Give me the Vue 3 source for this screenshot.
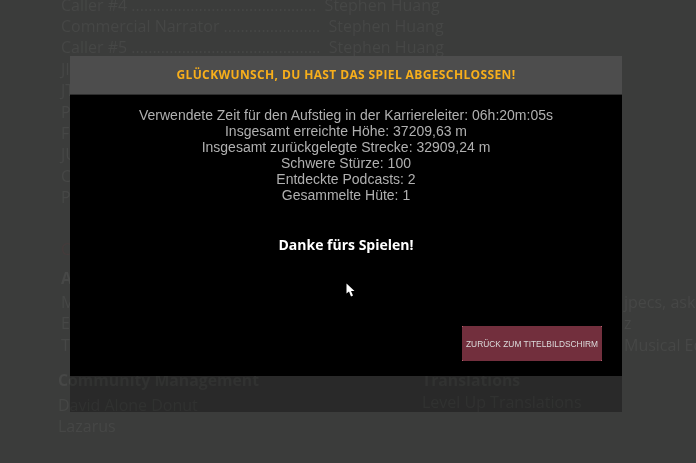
<script setup>
const roles = [
  { label: 'Caller #4', dots: 44, name: 'Stephen Huang' },
  { label: 'Commercial Narrator', dots: 23, name: 'Stephen Huang' },
  { label: 'Caller #5', dots: 45, name: 'Stephen Huang' },
];
const hidden = ['JI', 'JT', 'P', 'F', 'JU', 'C', 'P'];
const stats = [
  'Verwendete Zeit für den Aufstieg in der Karriereleiter: 06h:20m:05s',
  'Insgesamt erreichte Höhe: 37209,63 m',
  'Insgesamt zurückgelegte Strecke: 32909,24 m',
  'Schwere Stürze: 100',
  'Entdeckte Podcasts: 2',
  'Gesammelte Hüte: 1',
];
</script>

<template>
  <div class="page">
    <div class="credits">
      <div class="cast">
        <p v-for="role in roles" :key="role.label" class="line">
          {{ role.label }} {{ '.'.repeat(role.dots) }}&nbsp; {{ role.name }}
        </p>
        <p v-for="(item, i) in hidden" :key="i" class="line">{{ item }}</p>
      </div>

      <p class="line redLine">C</p>

      <div class="audio">
        <h3 class="heading">A</h3>
        <div class="audioRows">
          <div class="audioRow"><span>M</span><span class="right">jpecs, ask</span></div>
          <div class="audioRow"><span>E</span><span class="right">z</span></div>
          <div class="audioRow"><span>T</span><span class="right">Musical Ed</span></div>
        </div>
      </div>

      <div class="columns">
        <div>
          <h3 class="heading">Community Management</h3>
          <p class="line name">David Alone Donut</p>
          <p class="line">Lazarus</p>
        </div>
        <div>
          <h3 class="heading">Translations</h3>
          <p class="line">Level Up Translations</p>
        </div>
      </div>
    </div>

    <div class="modal">
      <header class="modalHeader">GLÜCKWUNSCH, DU HAST DAS SPIEL ABGESCHLOSSEN!</header>
      <div class="modalBody">
        <p v-for="line in stats" :key="line" class="stat">{{ line }}</p>
        <p class="thanks">Danke fürs Spielen!</p>
        <button class="backBtn">ZURÜCK ZUM TITELBILDSCHIRM</button>
        <svg class="cursor" width="10" height="15" viewBox="0 0 10 15">
          <path d="M0.5 0.5 L0.5 10.5 L3 8.5 L5 13.5 L7 12.5 L5 8 L8.5 8 Z" fill="#fff" />
        </svg>
      </div>
      <div class="modalFooter"></div>
    </div>
  </div>
</template>

<style>
html, body {
  margin: 0;
  background: #3b3c3b;
}
</style>

<style scoped>
.page {
  position: relative;
  width: 696px;
  height: 463px;
  overflow: hidden;
  background: #3b3c3b;
  font-family: "Open Sans", sans-serif;
  color: #464746;
  filter: blur(0.3px);
}

.credits {
  padding: 0 0 0 61px;
  margin-top: -5.5px;
  font-size: 16px;
  line-height: 21.4px;
}

.line {
  margin: 0;
  white-space: nowrap;
}

.redLine {
  margin-top: 30.5px;
  color: #443b3b;
}

.heading {
  margin: 0;
  font-size: 15.8px;
  font-weight: 700;
  white-space: nowrap;
  color: #474847;
}

.audio {
  margin-top: 8px;
}

.audioRows {
  margin-top: 2px;
}

.audioRow {
  display: flex;
  justify-content: space-between;
}

.right {
  width: 72px;
  white-space: nowrap;
}

.columns {
  display: grid;
  grid-template-columns: 364px 1fr;
  margin-top: 14px;
  margin-left: -3px;
}

.name {
  margin-top: 3px;
}

.modal {
  position: absolute;
  left: 70px;
  top: 56px;
  width: 552px;
  height: 356px;
  display: flex;
  flex-direction: column;
}

.modalHeader {
  height: 38px;
  line-height: 38px;
  flex-shrink: 0;
  background: #4d4d4d;
  border-bottom: 1px solid #2e2e2e;
  text-align: center;
  font-size: 12px;
  font-weight: 700;
  letter-spacing: 0.38px;
  color: #f8af1b;
}

.modalBody {
  position: relative;
  flex: 1;
  background: #000;
  padding-top: 12px;
  text-align: center;
}

.stat {
  margin: 0;
  font-family: "Liberation Sans", Arial, sans-serif;
  font-size: 14px;
  line-height: 16px;
  color: #b0b0b0;
}

.thanks {
  margin: 32px 0 0;
  font-size: 14px;
  line-height: 20px;
  font-weight: 700;
  color: #fff;
}

.backBtn {
  position: absolute;
  right: 20px;
  bottom: 15px;
  width: 140px;
  height: 35px;
  padding: 0;
  border: none;
  background:
    linear-gradient(#b8606f, #b8606f) 0 0 / 1px 1px no-repeat,
    linear-gradient(#b8606f, #b8606f) 100% 0 / 1px 1px no-repeat,
    linear-gradient(#b8606f, #b8606f) 0 100% / 1px 1px no-repeat,
    linear-gradient(#b8606f, #b8606f) 100% 100% / 1px 1px no-repeat,
    #722f3d;
  font-family: "Liberation Sans", Arial, sans-serif;
  font-size: 8.4px;
  white-space: nowrap;
  color: #dcdcdc;
}

.cursor {
  position: absolute;
  left: 276px;
  top: 188px;
}

.modalFooter {
  height: 36px;
  flex-shrink: 0;
  background: rgba(0, 0, 0, 0.3);
}
</style>
